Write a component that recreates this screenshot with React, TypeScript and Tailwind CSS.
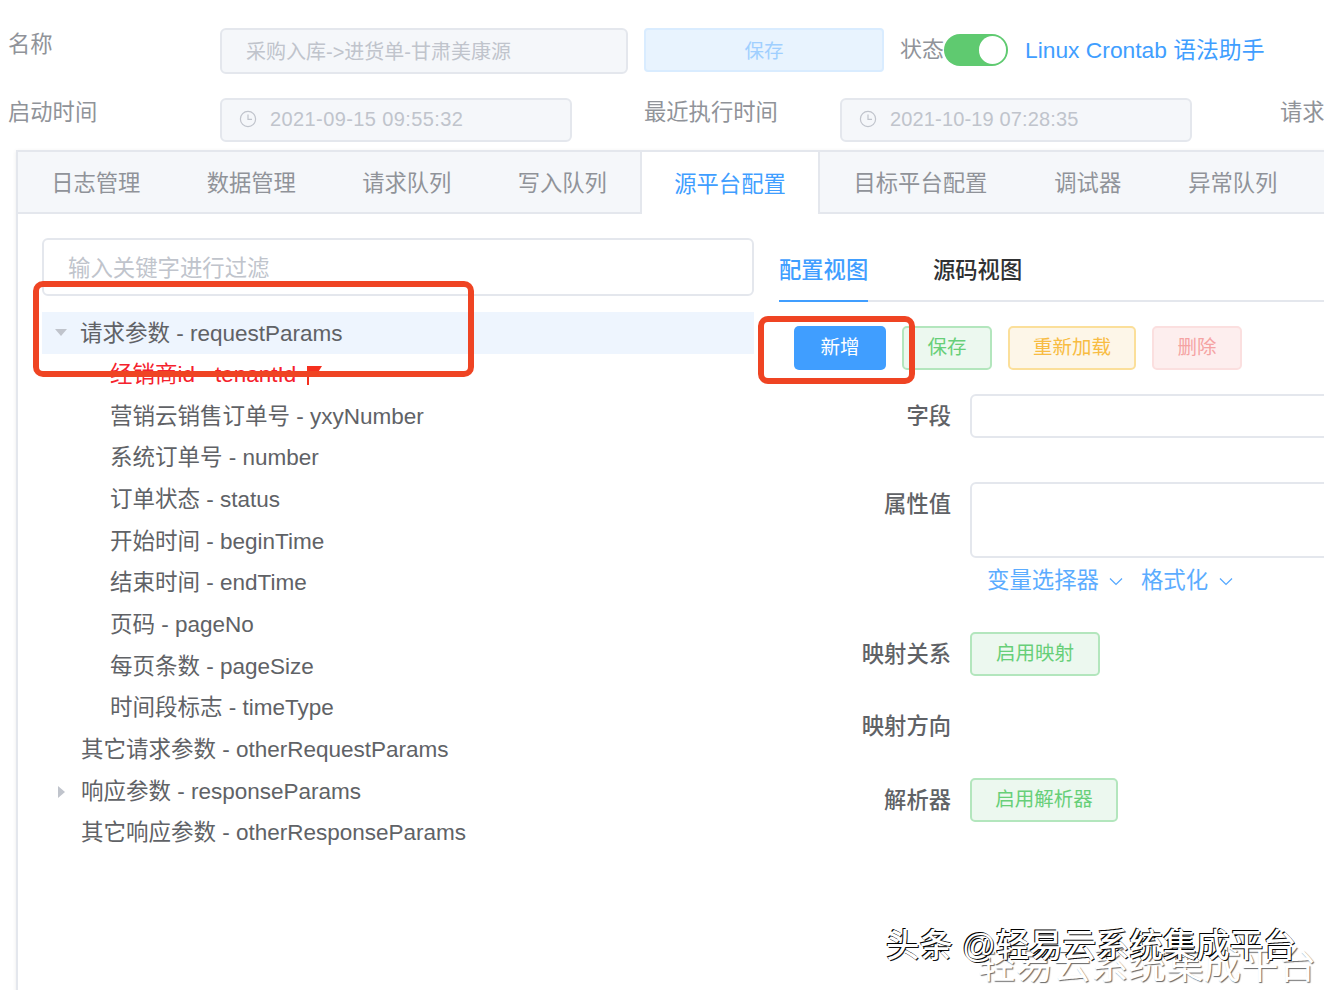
import React from "react";

const font = "font-['Liberation_Sans','Noto_Sans_CJK_SC',sans-serif]";

function ClockIcon() {
  return (
    <svg width="18" height="18" viewBox="0 0 18 18" fill="none" stroke="#c0c4cc" strokeWidth="1.2" className="shrink-0">
      <circle cx="9" cy="9" r="7.6" />
      <path d="M9 4.4V9.4H13" />
    </svg>
  );
}

function Chevron() {
  return (
    <svg width="14" height="9" viewBox="0 0 14 9" fill="none" stroke="#409eff" strokeWidth="1.2" className="shrink-0 opacity-90">
      <path d="M1 1.5L7 7.5L13 1.5" />
    </svg>
  );
}

function DateBox({ value, tracking }: { value: string; tracking: string }) {
  return (
    <div className={`w-[352px] h-[44px] shrink-0 border-2 border-[#e4e7ed] rounded-[6px] bg-[#f5f7fa] flex items-center pl-[17px] pb-[2px] gap-[13px] text-[20px] text-[#c0c4cc] ${tracking}`}>
      <ClockIcon />
      <span>{value}</span>
    </div>
  );
}

const topTabs = ["日志管理", "数据管理", "请求队列", "写入队列"];
const restTabs = ["目标平台配置", "调试器", "异常队列"];

const children = [
  "营销云销售订单号 - yxyNumber",
  "系统订单号 - number",
  "订单状态 - status",
  "开始时间 - beginTime",
  "结束时间 - endTime",
  "页码 - pageNo",
  "每页条数 - pageSize",
  "时间段标志 - timeType",
];

function TreeRow({ children: c, indent, active, red }: { children: React.ReactNode; indent: string; active?: boolean; red?: boolean }) {
  return (
    <div
      className={`h-[41.67px] flex items-center pt-[1px] text-[22.5px] whitespace-nowrap ${indent} ${active ? "bg-[#eef5fe]" : ""} ${red ? "text-[#f5222d]" : "text-[#606266]"}`}
    >
      {c}
    </div>
  );
}

function FormLabel({ children: c }: { children: React.ReactNode }) {
  return <div className="w-[172px] h-[44px] shrink-0 text-right text-[22.3px] font-medium text-[#606266] leading-[46px]">{c}</div>;
}

function GhostButton({ children: c, className }: { children: React.ReactNode; className: string }) {
  return <div className={`h-[44px] shrink-0 rounded-[5px] border-2 flex items-center justify-center text-[19.5px] ${className}`}>{c}</div>;
}

export default function App() {
  return (
    <div className={`relative w-[1324px] h-[990px] overflow-hidden bg-white pt-[28px] ${font}`}>
      {/* Row 1 */}
      <div className="flex items-start w-[1400px] h-[46px]">
        <div className="w-[212px] ml-[8px] shrink-0 text-[22.3px] leading-[34px] text-[#909399]">名称</div>
        <div className="w-[408px] h-[46px] shrink-0 border-2 border-[#e4e7ed] rounded-[6px] bg-[#f5f7fa] flex items-center pl-[24px] pt-[2px] text-[20px] text-[#c0c4cc]">
          采购入库-&gt;进货单-甘肃美康源
        </div>
        <div className="ml-[16px] w-[240px] h-[44px] shrink-0 border-2 border-[#d9ecff] rounded-[4px] bg-[#e8f3fe] flex items-center justify-center pt-[4px] text-[19.5px] text-[#a0cfff]">
          保存
        </div>
        <div className="ml-[16px] mt-[6px] w-[44px] whitespace-nowrap shrink-0 text-[22px] leading-[32px] text-[#909399]">状态</div>
        <div className="mt-[6px] w-[64px] h-[32px] shrink-0 rounded-full bg-[#5fca70] flex items-center justify-end pr-[2px]">
          <div className="w-[27px] h-[28px] rounded-full bg-white" />
        </div>
        <div className="ml-[17px] mt-[6px] shrink-0 text-[22.8px] leading-[32px] text-[#409eff]">Linux Crontab 语法助手</div>
      </div>

      {/* Row 2 */}
      <div className="flex items-start w-[1400px] h-[44px] mt-[24px]">
        <div className="w-[212px] ml-[8px] shrink-0 text-[22.3px] leading-[30px] text-[#909399]">启动时间</div>
        <DateBox value="2021-09-15 09:55:32" tracking="tracking-[0.4px]" />
        <div className="w-[196px] ml-[72px] shrink-0 text-[22.3px] leading-[30px] text-[#909399] whitespace-nowrap">最近执行时间</div>
        <DateBox value="2021-10-19 07:28:35" tracking="tracking-[0.15px]" />
        <div className="ml-[88px] shrink-0 text-[22.3px] leading-[30px] text-[#909399]">请求</div>
      </div>

      {/* Card */}
      <div className="ml-[16px] mt-[8px] w-[1400px] h-[900px] border-2 border-[#e4e7ed] shadow-[0_1px_4px_rgba(0,0,0,0.08)]">
        <div className="h-[62px] flex bg-[#f5f7fa] border-b-2 border-[#e4e7ed]">
          {topTabs.map((t) => (
            <div key={t} className="w-[155.5px] shrink-0 flex items-center justify-center pt-[4px] text-[22.3px] text-[#909399]">
              {t}
            </div>
          ))}
          <div className="w-[180px] h-[62px] shrink-0 bg-white border-x-2 border-[#e4e7ed] flex items-center justify-center pt-[4px] text-[22.3px] text-[#409eff]">
            源平台配置
          </div>
          {restTabs.map((t) => (
            <div key={t} className="shrink-0 px-[33.5px] flex items-center pt-[4px] text-[22.3px] text-[#909399]">
              {t}
            </div>
          ))}
        </div>

        <div className="flex pt-[24px] pl-[24px]">
          {/* Left tree */}
          <div className="w-[712px] shrink-0">
            <div className="h-[58px] border-2 border-[#e4e7ed] rounded-[6px] flex items-center pl-[24px] pt-[4px] text-[22.4px] text-[#c0c4cc]">
              输入关键字进行过滤
            </div>
            <div className="mt-[16px]">
              <TreeRow indent="pl-[13px] pt-[3px]" active>
                <span className="w-0 h-0 border-x-[6px] border-x-transparent border-t-[7px] border-t-[#c0c4cc] mr-[14px] -mt-[3px]" />
                <span className="-ml-[1px]">请求参数 - requestParams</span>
              </TreeRow>
              <TreeRow indent="pl-[68px]" red>
                <span>经销商id - tenantId</span>
                <svg width="18" height="22" viewBox="0 0 18 22" className="ml-[9px]">
                  <path d="M2 2H17L12 10H4V21H2Z" fill="#f5301f" />
                </svg>
              </TreeRow>
              {children.map((t) => (
                <TreeRow key={t} indent="pl-[68px]">
                  {t}
                </TreeRow>
              ))}
              <TreeRow indent="pl-[39px]">其它请求参数 - otherRequestParams</TreeRow>
              <TreeRow indent="pl-[16px]">
                <span className="w-0 h-0 border-y-[6px] border-y-transparent border-l-[7px] border-l-[#c0c4cc] mr-[16px]" />
                <span>响应参数 - responseParams</span>
              </TreeRow>
              <TreeRow indent="pl-[39px]">其它响应参数 - otherResponseParams</TreeRow>
            </div>
          </div>

          {/* Right panel */}
          <div className="ml-[25px] w-[600px] shrink-0">
            <div className="h-[64px] flex border-b-2 border-[#e4e7ed]">
              <div className="h-[64px] border-b-2 border-[#409eff] w-[89px] pt-[17px] text-[22.3px] leading-[32px] font-medium text-[#409eff] whitespace-nowrap">配置视图</div>
              <div className="ml-[65px] pt-[17px] text-[22.3px] leading-[32px] font-medium text-[#303133] whitespace-nowrap">源码视图</div>
            </div>

            <div className="flex mt-[24px] ml-[15px] gap-[16px]">
              <div className="w-[92px] h-[44px] rounded-[5px] bg-[#409eff] text-white flex items-center justify-center text-[19.5px]">新增</div>
              <GhostButton className="w-[90px] bg-[#ecf8ef] border-[#b3e6bd] text-[#67cf78]">保存</GhostButton>
              <GhostButton className="w-[128px] bg-[#fdf6e8] border-[#fbdf9a] text-[#f8bc42]">重新加载</GhostButton>
              <GhostButton className="w-[90px] bg-[#fdeeee] border-[#fbdfdf] text-[#f5a3a3]">删除</GhostButton>
            </div>

            <div className="flex mt-[24px]">
              <FormLabel>字段</FormLabel>
              <div className="ml-[19px] w-[400px] h-[44px] border-2 border-[#e4e7ed] rounded-[6px]" />
            </div>
            <div className="flex mt-[44px]">
              <FormLabel>属性值</FormLabel>
              <div className="ml-[19px] w-[400px] h-[76px] border-2 border-[#e4e7ed] rounded-[6px]" />
            </div>
            <div className="flex items-center h-[44px] pt-[2px] ml-[208px] text-[22.4px] text-[#409eff] whitespace-nowrap">
              <span className="opacity-85">变量选择器</span>
              <span className="ml-[10px]"><Chevron /></span>
              <span className="ml-[18px] opacity-85">格式化</span>
              <span className="ml-[11px]"><Chevron /></span>
            </div>
            <div className="flex mt-[30px]">
              <FormLabel>映射关系</FormLabel>
              <GhostButton className="ml-[19px] w-[130px] bg-[#ecf8ef] border-[#b3e6bd] text-[#67cf78]">启用映射</GhostButton>
            </div>
            <div className="flex mt-[28px]">
              <FormLabel>映射方向</FormLabel>
            </div>
            <div className="flex mt-[30px]">
              <FormLabel>解析器</FormLabel>
              <GhostButton className="ml-[19px] w-[148px] bg-[#ecf8ef] border-[#b3e6bd] text-[#67cf78]">启用解析器</GhostButton>
            </div>
          </div>
        </div>
      </div>

      {/* Annotation rectangles */}
      <div className="absolute left-[33px] top-[281px] w-[441px] h-[96px] border-[6px] border-[#ef4423] rounded-[10px]" />
      <div className="absolute left-[758px] top-[316px] w-[157px] h-[68px] border-[6px] border-[#ef4423] rounded-[10px]" />

      {/* Watermark */}
      <div className="absolute left-[978px] top-[941px] text-[37.6px] leading-[48px] whitespace-nowrap text-white [text-shadow:1px_1px_1px_#666]">
        轻易云系统集成平台
      </div>
      <div className="absolute left-[886px] top-[925px] text-[33.4px] leading-[42px] font-medium whitespace-nowrap text-white [text-shadow:-1px_-1px_0_#000,1px_1px_0_#111]">
        头条 @轻易云系统集成平台
      </div>
    </div>
  );
}
